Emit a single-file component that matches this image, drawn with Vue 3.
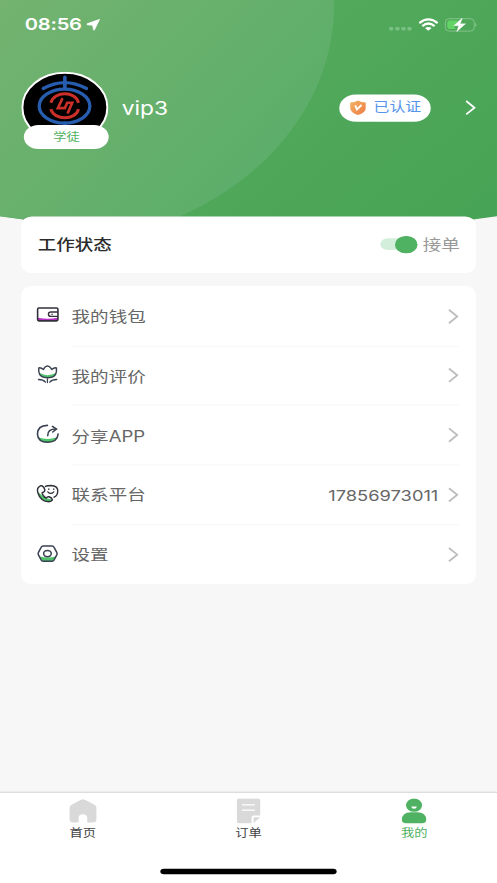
<script setup>
const rows = [
  { id: 'wallet', label: '我的钱包', box: '48 70 72 66' },
  { id: 'review', label: '我的评价', box: '48 249 72 66' },
  { id: 'share', label: '分享APP', box: '48 68 72 66' },
  { id: 'contact', label: '联系平台', box: '48 248 72 66', value: '17856973011' },
  { id: 'settings', label: '设置', box: '48 427 72 66' },
]
</script>

<template>
  <div class="screen">
    <div class="phone">
      <header class="header">
        <svg class="header-bg" viewBox="0 0 375 216" preserveAspectRatio="none">
          <defs>
            <linearGradient id="base" gradientUnits="userSpaceOnUse" x1="80" y1="-40" x2="350" y2="230">
              <stop offset="0" stop-color="#5aad60" />
              <stop offset="1" stop-color="#47a355" />
            </linearGradient>
            <linearGradient id="glow" gradientUnits="userSpaceOnUse" x1="0" y1="0" x2="190" y2="150">
              <stop offset="0" stop-color="#74b370" />
              <stop offset="1" stop-color="#5dae6a" />
            </linearGradient>
            <clipPath id="hero"><path d="M0 0H375V198.8Q187.5 232 0 198.8Z" /></clipPath>
          </defs>
          <g clip-path="url(#hero)">
            <rect width="375" height="216" fill="url(#base)" />
            <circle cx="32" cy="5" r="220" fill="url(#glow)" />
          </g>
        </svg>

        <div class="status">
          <span class="time">08:56</span>
          <svg class="locate" viewBox="258 57 43 37" preserveAspectRatio="none">
            <path d="M298 60L261 73Q259 75 262 76L278 77L280 91Q281 94 283 91Z" fill="#fff" stroke="#fff" stroke-width="2.500" stroke-linejoin="round" />
          </svg>
          <svg class="signals" viewBox="1166 54 270 44" preserveAspectRatio="none">
            <g fill="#7abf83">
              <rect x="1168" y="83" width="13" height="10" rx="4" />
              <rect x="1187" y="83" width="13" height="10" rx="4" />
              <rect x="1205" y="83" width="13" height="10" rx="4" />
              <rect x="1223" y="83" width="13" height="10" rx="4" />
            </g>
            <g fill="none" stroke="#fff" stroke-width="7">
              <path d="M1259 71Q1286 49 1314 71" />
              <path d="M1268 80Q1286 65 1305 80" />
            </g>
            <path d="M1276 86Q1286 79 1296 86L1287 93H1285Z" fill="#fff" />
            <rect x="1337" y="58" width="87" height="37" rx="11" fill="none" stroke="#8bc891" stroke-width="2.6" />
            <path d="M1427 70Q1434 76 1427 83Z" fill="#8bc891" />
            <path d="M1350 63H1377L1362 80L1369 89H1350Q1343 89 1343 82V70Q1343 63 1350 63Z" fill="#62d466" />
            <path d="M1388 56L1362 79H1377L1371 97L1398 73H1382Z" fill="#fff" stroke="#fff" stroke-width="1" />
          </svg>
        </div>

        <div class="profile">
          <div class="avatar">
            <svg class="portrait" viewBox="65 216 262 214" preserveAspectRatio="none">
              <ellipse cx="196" cy="323" rx="127.5" ry="104" fill="#000" stroke="#fff" stroke-width="6" />
              <g fill="none" stroke="#275dae" stroke-width="10" stroke-linecap="round">
                <ellipse cx="195" cy="319" rx="76" ry="51" />
                <path d="M131 266Q195 231 261 266" />
                <path d="M196 233V266M196 370V386" stroke-width="11" />
              </g>
              <g fill="none" stroke="#cb2f29" stroke-width="9">
                <path d="M154 309C164 273 228 273 237 309" />
                <path d="M154 328C164 363 228 363 237 328" />
                <path d="M189 295L175 325H196L203 309H218L204 341" stroke-width="8" />
              </g>
            </svg>
            <span class="level">学徒</span>
          </div>
          <span class="name">vip3</span>
          <span class="verified">
            <svg class="shield" viewBox="1049 297 50 46" preserveAspectRatio="none">
              <defs>
                <linearGradient id="amber" x1="0" y1="0" x2="1" y2="1">
                  <stop offset="0" stop-color="#f4b463" />
                  <stop offset="1" stop-color="#ed7b45" />
                </linearGradient>
              </defs>
              <path d="M1073 298Q1083 304 1097 304V321Q1097 335 1073 342Q1050 335 1050 321V304Q1064 304 1073 298Z" fill="url(#amber)" />
              <path d="M1065 313L1070 325L1084 312" fill="none" stroke="#fff" stroke-width="5.500" />
            </svg>
            <span class="verified-text">已认证</span>
          </span>
          <svg class="chevron light" viewBox="0 0 32 46" preserveAspectRatio="none"><path d="M3 3L28 23L3 43" /></svg>
        </div>
      </header>

      <main class="content">
        <section class="card work">
          <h1 class="title">工作状态</h1>
          <span class="toggle"><i class="knob"></i></span>
          <span class="state">接单</span>
        </section>

        <section class="card menu">
          <div v-for="row in rows" :key="row.id" class="row">
            <svg class="icon" :viewBox="row.box" preserveAspectRatio="none">
              <g v-if="row.id === 'wallet'" fill="none" stroke="#34303b" stroke-width="4.800">
                <path d="M54 113Q84 120 114 113V121H54Z" fill="#b52fc4" stroke="none" />
                <rect x="53.500" y="84" width="61" height="38.500" rx="4" />
                <path d="M115 96H94Q86 96 86 102.500Q86 109 94 109H115" stroke-width="4.200" />
                <circle cx="97" cy="102.500" r="1.500" fill="#34303b" stroke-width="1.500" />
              </g>
              <g v-else-if="row.id === 'review'" fill="none" stroke="#3a4150" stroke-width="4.300" stroke-linejoin="round" stroke-linecap="round">
                <path d="M58 278Q83 292 109 278Q105 294 84 294Q62 294 58 278Z" fill="#4fc26a" stroke="none" />
                <path d="M57 263Q65 262 71 268Q75 258 83 257Q91 258 96 268Q102 262 110 263V274Q108 293 84 293Q59 293 57 274Z" />
                <path d="M83 296V307M56 298Q70 298 77 306M111 298Q97 298 90 306" stroke-width="3.800" />
              </g>
              <g v-else-if="row.id === 'share'" fill="none" stroke="#3a4150" stroke-width="4.800" stroke-linecap="round">
                <path d="M55 111Q83 121 112 111Q106 127 83 127Q62 127 55 111Z" fill="#4fc26a" stroke="none" />
                <path d="M83 75Q53 76 53 101Q54 126 84 126Q113 125 115 101" />
                <path d="M84 106Q83 86 108 86" />
                <path d="M98 78L110 86L99 95" />
              </g>
              <g v-else-if="row.id === 'contact'" fill="none" stroke="#30333b" stroke-width="4.400" stroke-linecap="round" stroke-linejoin="round">
                <path d="M55 274Q69 294 96 298L88 305Q61 303 55 274Z" fill="#4fc26a" stroke="none" />
                <path d="M62 257Q50 262 54 277Q62 304 87 305Q95 304 98 299Q97 294 88 290Q83 289 79 294Q68 288 67 278Q76 275 75 269Q71 255 62 257Z" />
                <path d="M77 259Q82 256 94 256Q113 257 114 271Q114 287 103 291" />
                <path d="M87 266V268M102 266V268M84 275Q93 285 102 275" stroke-width="3.800" />
              </g>
              <g v-else fill="none" stroke="#3a4150" stroke-width="4.600" stroke-linejoin="round">
                <path d="M59 469Q83 475 108 469L98 482H69Z" fill="#4fc26a" stroke="none" />
                <path d="M70 437H97Q101 437 103 441L111 456Q113 460 111 464L103 479Q101 483 97 483H70Q66 483 64 479L56 464Q54 460 56 456L64 441Q66 437 70 437Z" />
                <ellipse cx="83" cy="460" rx="11.500" ry="9.500" />
              </g>
            </svg>
            <div class="row-body">
              <span class="label">{{ row.label }}</span>
              <span v-if="row.value" class="value">{{ row.value }}</span>
              <svg class="chevron" viewBox="0 0 32 46" preserveAspectRatio="none"><path d="M3 3L28 23L3 43" /></svg>
            </div>
          </div>
        </section>
      </main>

      <nav class="tabs">
        <div class="tab">
          <svg class="tab-icon" viewBox="87 56 84 76" preserveAspectRatio="none">
            <path d="M123 61Q129 58 135 61L164 76Q170 79 170 85V119Q170 129 159 129H142V115Q142 104 129 104Q116 104 116 115V129H100Q89 129 89 119V85Q89 79 95 76Z" fill="#d9d9d9" />
          </svg>
          <span>首页</span>
        </div>
        <div class="tab">
          <svg class="tab-icon" viewBox="584 56 84 76" preserveAspectRatio="none">
            <path d="M596 57H656Q661 57 661 62V108H641Q635 108 635 114V131H596Q591 131 591 126V62Q591 57 596 57Z" fill="#d9d9d9" />
            <path d="M642 113H661L641 131V115Z" fill="#d9d9d9" />
            <path d="M606 76H645M606 92H645" stroke="#fff" stroke-width="3.500" />
          </svg>
          <span>订单</span>
        </div>
        <div class="tab active">
          <svg class="tab-icon" viewBox="330 56 84 76" preserveAspectRatio="none">
            <ellipse cx="371.500" cy="77" rx="24" ry="20" fill="#4fb162" />
            <path d="M363 81H380Q379 88 371.500 88Q364 88 363 81Z" fill="#fff" />
            <path d="M335 121Q335 98 362 98H381Q408 98 408 121Q408 131 398 131H345Q335 131 335 121Z" fill="#4fb162" />
          </svg>
          <span>我的</span>
        </div>
        <i class="home-bar"></i>
      </nav>
    </div>
  </div>
</template>

<style>
body {
  margin: 0;
}
</style>

<style scoped>
.screen {
  width: 497px;
  height: 883px;
  overflow: hidden;
}
.phone {
  display: flex;
  flex-direction: column;
  width: 375px;
  height: 812px;
  background: #f7f7f7;
  font-family: Inter, "Noto Sans CJK SC", sans-serif;
  transform: scale(1.32533, 1.08744);
  transform-origin: 0 0;
}
.header {
  position: relative;
  height: 199.200px;
  flex: none;
}
.header-bg {
  position: absolute;
  top: 0;
  left: 0;
  width: 375px;
  height: 216px;
}
.status {
  position: relative;
  display: flex;
  align-items: center;
  height: 46px;
  padding: 0 14px 0 18.600px;
}
.time {
  width: 46.300px;
  padding-bottom: 1px;
  color: #fff;
  font-size: 15.200px;
  font-weight: 600;
  letter-spacing: -0.150px;
  white-space: nowrap;
}
.locate {
  width: 10.800px;
  height: 11.300px;
}
.signals {
  width: 67.900px;
  height: 13.500px;
  margin-left: auto;
}
.profile {
  position: relative;
  display: flex;
  align-items: center;
  height: 66px;
  margin-top: 20.200px;
  padding: 0 16.200px 0 16.400px;
}
.avatar {
  position: relative;
  width: 66px;
  height: 66px;
}
.portrait {
  display: block;
  width: 65.900px;
  height: 65.600px;
}
.level {
  position: absolute;
  left: 1.700px;
  top: 49.200px;
  width: 64.200px;
  height: 21.800px;
  border-radius: 11px;
  background: #fff;
  color: #4fb162;
  font-size: 10px;
  line-height: 23px;
  text-align: center;
}
.name {
  margin-left: 9.500px;
  color: #fff;
  font-size: 17.200px;
}
.verified {
  display: flex;
  align-items: center;
  gap: 5.600px;
  box-sizing: border-box;
  width: 69.300px;
  height: 25.200px;
  margin-left: auto;
  padding-left: 8px;
  border-radius: 13px;
  background: #fff;
  color: #5594ea;
  font-size: 12px;
  white-space: nowrap;
}
.verified-text {
  height: 25.200px;
  line-height: 22.400px;
}
.shield {
  width: 12.600px;
  height: 14.100px;
  margin-bottom: 1px;
}
.chevron {
  flex: none;
  width: 8px;
  height: 14.100px;
  fill: none;
  stroke: #bdbdbd;
  stroke-width: 5.500;
}
.chevron.light {
  margin-left: 25.900px;
  stroke: #fff;
}
.content {
  position: relative;
  flex: 1;
  padding: 0 16.400px;
}
.card {
  border-radius: 8px;
  background: #fff;
}
.work {
  display: flex;
  align-items: center;
  height: 51.600px;
  padding: 0 11.700px 0 12px;
}
.title {
  margin: 0;
  padding-top: 0.800px;
  color: #2b2b2b;
  font-size: 14px;
  font-weight: 500;
  line-height: 20px;
}
.toggle {
  display: flex;
  align-items: center;
  justify-content: flex-end;
  width: 28.300px;
  height: 11px;
  margin-left: auto;
  border-radius: 6px;
  background: #d3eedb;
}
.knob {
  flex: none;
  width: 16.500px;
  height: 16.500px;
  border-radius: 50%;
  background: #4fb162;
}
.state {
  margin-left: 4px;
  padding-top: 0.800px;
  color: #999;
  font-size: 14px;
  line-height: 20px;
}
.menu {
  margin-top: 12.600px;
}
.row {
  display: flex;
  align-items: center;
  height: 54.950px;
  padding: 0 12.400px 0 10.900px;
}
.icon {
  width: 18.100px;
  height: 20.200px;
  margin-bottom: 3px;
}
.row-body {
  display: flex;
  flex: 1;
  align-items: center;
  height: 54.300px;
  margin-left: 8.600px;
  border-bottom: 0.700px solid #f7f7f7;
}
.row:last-child {
  height: 54.200px;
}
.row:last-child .row-body {
  border-bottom-color: transparent;
}
.label {
  padding-bottom: 1.400px;
  color: #666;
  font-size: 14px;
}
.value {
  margin-left: auto;
  padding-top: 1px;
  color: #666;
  font-size: 13.800px;
}
.row .chevron {
  margin-top: 0.500px;
  margin-left: auto;
}
.row .value + .chevron {
  margin-left: 7.500px;
}
.tabs {
  position: relative;
  display: flex;
  box-sizing: border-box;
  flex: none;
  height: 84.200px;
  border-top: 1px solid #d2d2d2;
  background: #fff;
}
.tab {
  display: flex;
  flex: 1;
  flex-direction: column;
  align-items: center;
  padding-top: 5.600px;
  color: #444;
  font-size: 10px;
  line-height: 14px;
}
.tab-icon {
  width: 21.100px;
  height: 23.300px;
  margin-bottom: 1.400px;
}
.active {
  color: #4fb162;
}
.home-bar {
  position: absolute;
  left: 120.700px;
  bottom: 8.200px;
  width: 133.800px;
  height: 5px;
  border-radius: 3px;
  background: #000;
}
</style>
